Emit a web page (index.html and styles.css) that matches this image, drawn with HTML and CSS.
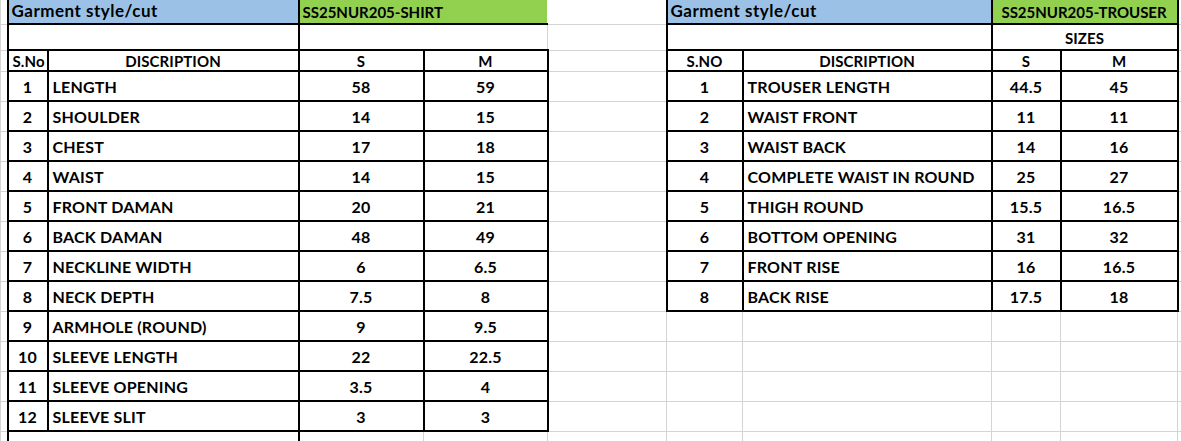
FILE: index.html
```html
<!DOCTYPE html>
<html lang="en">
<head>
<meta charset="utf-8">
<title>Garment size specification</title>
<link rel="stylesheet" href="styles.css">
</head>
<body>
<table class="sheet">
  <colgroup>
    <col class="w-a"><col class="w-b"><col class="w-c"><col class="w-d"><col class="w-e">
    <col class="w-f"><col class="w-g"><col class="w-h"><col class="w-i"><col class="w-j"><col class="w-k">
  </colgroup>
  <tbody>
    <tr class="r-title">
      <td class="top"></td>
      <td colspan="2" class="top title label blue bl br bb">Garment style/cut</td>
      <td colspan="2" class="top title code green bb nr">SS25NUR205-SHIRT</td>
      <td class="top nl"></td>
      <td colspan="2" class="top title label blue bl br bb">Garment style/cut</td>
      <td colspan="2" class="top title code green br bb ctr">SS25NUR205-TROUSER</td>
      <td class="top"></td>
    </tr>
    <tr class="r-blank">
      <td></td>
      <td colspan="2" class="bl br"></td>
      <td colspan="2"></td>
      <td></td>
      <td colspan="2" class="bl br"></td>
      <td colspan="2" class="br head sizes ctr">SIZES</td>
      <td></td>
    </tr>
    <tr class="r-head">
      <td></td>
      <td class="box head ctr">S.No</td>
      <td class="box head ctr">DISCRIPTION</td>
      <td class="box head ctr">S</td>
      <td class="box head ctr">M</td>
      <td></td>
      <td class="box head ctr">S.NO</td>
      <td class="box head ctr">DISCRIPTION</td>
      <td class="box head ctr">S</td>
      <td class="box head ctr">M</td>
      <td></td>
    </tr>
    <tr class="r-data">
      <td></td><td class="box ctr">1</td><td class="box">LENGTH</td><td class="box ctr">58</td><td class="box ctr">59</td>
      <td></td><td class="box ctr">1</td><td class="box">TROUSER LENGTH</td><td class="box ctr">44.5</td><td class="box ctr">45</td><td></td>
    </tr>
    <tr class="r-data">
      <td></td><td class="box ctr">2</td><td class="box">SHOULDER</td><td class="box ctr">14</td><td class="box ctr">15</td>
      <td></td><td class="box ctr">2</td><td class="box">WAIST FRONT</td><td class="box ctr">11</td><td class="box ctr">11</td><td></td>
    </tr>
    <tr class="r-data">
      <td></td><td class="box ctr">3</td><td class="box">CHEST</td><td class="box ctr">17</td><td class="box ctr">18</td>
      <td></td><td class="box ctr">3</td><td class="box">WAIST BACK</td><td class="box ctr">14</td><td class="box ctr">16</td><td></td>
    </tr>
    <tr class="r-data">
      <td></td><td class="box ctr">4</td><td class="box">WAIST</td><td class="box ctr">14</td><td class="box ctr">15</td>
      <td></td><td class="box ctr">4</td><td class="box">COMPLETE WAIST IN ROUND</td><td class="box ctr">25</td><td class="box ctr">27</td><td></td>
    </tr>
    <tr class="r-data">
      <td></td><td class="box ctr">5</td><td class="box">FRONT DAMAN</td><td class="box ctr">20</td><td class="box ctr">21</td>
      <td></td><td class="box ctr">5</td><td class="box">THIGH ROUND</td><td class="box ctr">15.5</td><td class="box ctr">16.5</td><td></td>
    </tr>
    <tr class="r-data">
      <td></td><td class="box ctr">6</td><td class="box">BACK DAMAN</td><td class="box ctr">48</td><td class="box ctr">49</td>
      <td></td><td class="box ctr">6</td><td class="box">BOTTOM OPENING</td><td class="box ctr">31</td><td class="box ctr">32</td><td></td>
    </tr>
    <tr class="r-data">
      <td></td><td class="box ctr">7</td><td class="box">NECKLINE WIDTH</td><td class="box ctr">6</td><td class="box ctr">6.5</td>
      <td></td><td class="box ctr">7</td><td class="box">FRONT RISE</td><td class="box ctr">16</td><td class="box ctr">16.5</td><td></td>
    </tr>
    <tr class="r-data">
      <td></td><td class="box ctr">8</td><td class="box">NECK DEPTH</td><td class="box ctr">7.5</td><td class="box ctr">8</td>
      <td></td><td class="box ctr">8</td><td class="box">BACK RISE</td><td class="box ctr">17.5</td><td class="box ctr">18</td><td></td>
    </tr>
    <tr class="r-data">
      <td></td><td class="box ctr">9</td><td class="box">ARMHOLE (ROUND)</td><td class="box ctr">9</td><td class="box ctr">9.5</td>
      <td></td><td></td><td></td><td></td><td></td><td></td>
    </tr>
    <tr class="r-data">
      <td></td><td class="box ctr">10</td><td class="box">SLEEVE LENGTH</td><td class="box ctr">22</td><td class="box ctr">22.5</td>
      <td></td><td></td><td></td><td></td><td></td><td></td>
    </tr>
    <tr class="r-data">
      <td></td><td class="box ctr">11</td><td class="box">SLEEVE OPENING</td><td class="box ctr">3.5</td><td class="box ctr">4</td>
      <td></td><td></td><td></td><td></td><td></td><td></td>
    </tr>
    <tr class="r-data">
      <td></td><td class="box ctr">12</td><td class="box">SLEEVE SLIT</td><td class="box ctr">3</td><td class="box ctr">3</td>
      <td></td><td></td><td></td><td></td><td></td><td></td>
    </tr>
    <tr class="r-data">
      <td></td><td colspan="2" class="bl br"></td><td></td><td></td>
      <td></td><td></td><td></td><td></td><td></td><td></td>
    </tr>
  </tbody>
</table>
</body>
</html>
```
FILE: styles.css
```css
html, body {
  margin: 0;
  padding: 0;
  background: #ffffff;
  overflow: hidden;
}

.sheet {
  border-collapse: collapse;
  table-layout: fixed;
  width: 1181px;
  font-family: Lato, "Liberation Sans", sans-serif;
  font-weight: 700;
  font-size: 16px;
  letter-spacing: 0.2px;
  color: #000;
}

.w-a { width: 7px; }
.w-b { width: 40px; }
.w-c { width: 251px; }
.w-d { width: 125px; }
.w-e { width: 124px; }
.w-f { width: 119px; }
.w-g { width: 76px; }
.w-h { width: 249px; }
.w-i { width: 69px; }
.w-j { width: 117px; }
.w-k { width: 4px; }

.sheet td {
  border: 1px solid #d4d4d4;
  padding: 0 4px 4px;
  vertical-align: bottom;
  white-space: nowrap;
  overflow: hidden;
  line-height: 18px;
}

.r-title { height: 24px; }
.r-blank { height: 26px; }
.r-head { height: 21px; }
.r-data { height: 30px; }

.sheet td.top { border-top: 0; }
.sheet td.nr { border-right-color: transparent; }
.sheet td.nl { border-left-color: #ffffff; }

.sheet td.box { border: 2px solid #000; }
.sheet td.bl { border-left: 2px solid #000; }
.sheet td.br { border-right: 2px solid #000; }
.sheet td.bb { border-bottom: 2px solid #000; }

.ctr { text-align: center; }

.sheet td.title {
  padding-left: 3px;
  padding-bottom: 2px;
}

.sheet td.label {
  font-size: 17px;
  letter-spacing: 0.5px;
  line-height: 20px;
}

.sheet td.code {
  font-size: 15px;
  letter-spacing: 0;
  line-height: 18px;
}

.sheet td.head {
  font-size: 15px;
  letter-spacing: 0.1px;
  line-height: 16px;
  padding-bottom: 1px;
}

.sheet td.sizes {
  padding-bottom: 3px;
}

.blue { background: #9bc2e6; }
.green { background: #92d050; }
```
